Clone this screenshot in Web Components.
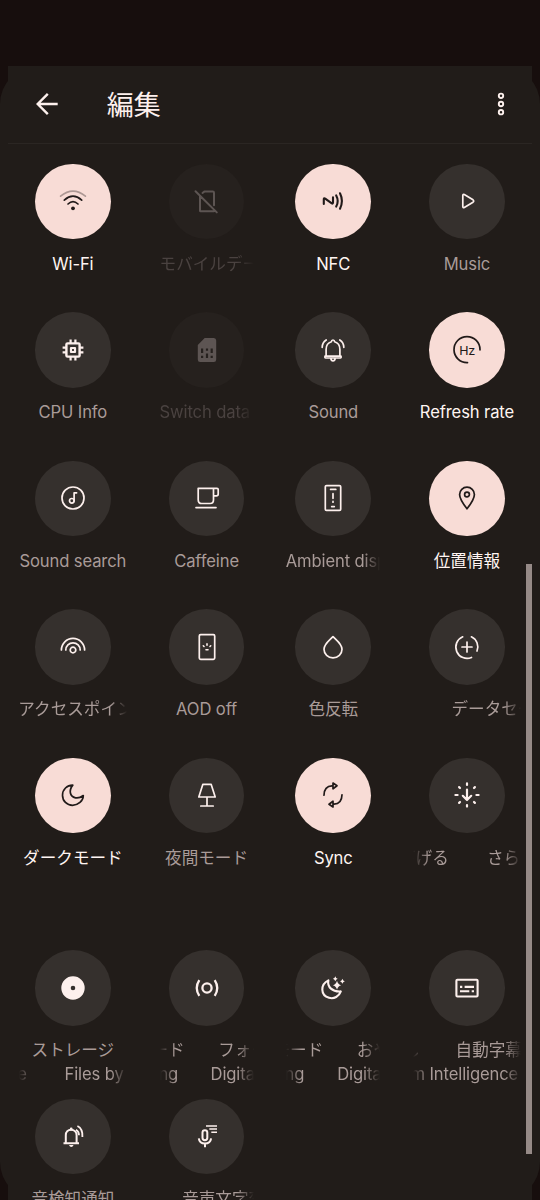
<!DOCTYPE html>
<html lang="ja">
<head>
<meta charset="utf-8">
<title>編集</title>
<style>
html,body{margin:0;padding:0;height:100%;overflow:hidden;background:#170e0d}
body{font-family:Inter,"Noto Sans CJK JP",sans-serif}
</style>
</head>
<body>
<edit-panel>
  <panel-header slot="header" heading="編集"></panel-header>
  <tile-grid>
    <qs-tile icon="wifi" state="on" label="Wi-Fi"></qs-tile>
    <qs-tile icon="nosim" state="off" label="モバイルデー" shift="0"></qs-tile>
    <qs-tile icon="nfc" state="on" label="NFC"></qs-tile>
    <qs-tile icon="play" label="Music"></qs-tile>
    <qs-tile icon="cpu" label="CPU Info"></qs-tile>
    <qs-tile icon="sim" state="off" label="Switch data" shift="0"></qs-tile>
    <qs-tile icon="bell" label="Sound"></qs-tile>
    <qs-tile icon="hz" state="on" label="Refresh rate"></qs-tile>
    <qs-tile icon="note" label="Sound search"></qs-tile>
    <qs-tile icon="cup" label="Caffeine"></qs-tile>
    <qs-tile icon="ambient" label="Ambient disp" shift="-.5"></qs-tile>
    <qs-tile icon="pin" state="on" label="位置情報"></qs-tile>
    <qs-tile icon="hotspot" label="アクセスポイン" shift="-.6"></qs-tile>
    <qs-tile icon="aod" label="AOD off"></qs-tile>
    <qs-tile icon="drop" label="色反転"></qs-tile>
    <qs-tile icon="saver" label="データセー" shift="38.5" fade="both"></qs-tile>
    <qs-tile icon="moon" state="on" label="ダークモード"></qs-tile>
    <qs-tile icon="lamp" label="夜間モード"></qs-tile>
    <qs-tile icon="sync" state="on" label="Sync"></qs-tile>
    <qs-tile icon="dim" label="下げる" next="さらに" shift="-14" at="74" fade="both"></qs-tile>
  </tile-grid>
  <tile-grid>
    <qs-tile icon="disc" label="ストレージ" sub="e" subnext="Files by" subend="8" subat="45.6" fade="both"></qs-tile>
    <qs-tile icon="focus" label="ード" next="フォー" end="25" at="58.6" sub="ng" subnext="Digital" subend="18.6" subat="51" fade="both"></qs-tile>
    <qs-tile icon="bedtime" label="モード" next="おや" end="37" at="70.6" sub="ng" subnext="Digital" subend="18" subat="51" fade="both"></qs-tile>
    <qs-tile icon="caption" label="し" next="自動字幕" end="7" at="42.6" sub="m Intelligence" subend="105.2" fade="both"></qs-tile>
    <qs-tile icon="alert" label="音検知通知"></qs-tile>
    <qs-tile icon="mic" label="音声文字変" shift="22.6" fade="both"></qs-tile>
  </tile-grid>
</edit-panel>

<script>
const ICONS = {
  wifi: '<path d="M-12.4-4.8Q0-15 12.4-4.8" opacity=".35"/><path d="M-8.7-.9Q0-8.7 8.7-.9M-5 3Q0-1.8 5 3"/><circle cy="7.3" r="1.9" class="f" stroke="none"/>',
  nosim: '<path d="M-11.5-9.8L9.8 11.4M-7-5V9.7Q-7 10.2-6.4 10.2H7M-4.5-8L-2.7-9.4H5.8Q7-9.4 7-8.2V4.2" stroke-width="2"/>',
  nfc: '<path d="M-9.2 3V-2Q-9-3.3-7.8-2.4L-1.2 2.4Q0 3 0 1.6V-3.7M3.2-5.6Q6.2 0 3.2 5.6M7-7.7Q10.8 0 7 7.7" stroke-width="2.1"/>',
  play: '<path d="M-4.2-5.6V5.6Q-4.2 7.2-2.7 6.5L6 1.2Q7.4 0 6-1.2L-2.7-6.5Q-4.2-7.2-4.2-5.6Z"/>',
  cpu: '<rect x="-6.6" y="-6.6" width="13.2" height="13.2" rx="1.2" stroke-width="2.4"/><rect x="-2" y="-2" width="4" height="4" stroke-width="2.2"/><path d="M-2.4-7V-10.4M2.4-7V-10.4M-2.4 7V10.4M2.4 7V10.4M-7-2.4H-10.4M-7 2.4H-10.4M7-2.4H10.4M7 2.4H10.4" stroke-width="2.2" stroke-linecap="butt"/>',
  sim: '<path class="f" fill-rule="evenodd" d="M-2.3-12H6.8Q9.2-12 9.2-9.5V9.5Q9.2 12 6.8 12H-6.8Q-9.2 12-9.2 9.5V-5ZM-6-1.5V3H-3.8V-1.5ZM-1.1-1.5V.8H1.1V-1.5ZM3.6-1.5V3H5.8V-1.5ZM-6 5.8V8H-3.8V5.8ZM-1.1 3.5V8H1.1V3.5ZM3.6 5.8V8H5.8V5.8Z" stroke="none"/>',
  bell: '<path d="M-6.9 6V-.5C-6.9-5-4.6-7.5-1.6-8.3Q-1.5-10 0-10Q1.5-10 1.6-8.3C4.6-7.5 6.9-5 6.9-.5V6M-8 6.1H8Q8.4 8 7.4 8H-7.4Q-8.4 8-8 6.1ZM-2.1 8.2Q-2.1 10.8 0 10.8Q2.1 10.8 2.1 8.2M-10.8-2.7Q-10.8-7.3-6.8-10M10.8-2.7Q10.8-7.3 6.8-10"/>',
  hz: '<path d="M13-.2A13 13 0 1 0 .5 12.6"/><text x="0" y="4.7" text-anchor="middle" font-size="13" font-weight="400" stroke="none" class="f" font-family="Roboto,sans-serif">Hz</text>',
  note: '<circle r="11"/><circle cx="-1.2" cy="2.8" r="2.3"/><path d="M1.1 2.8V-5.2H3.6"/>',
  cup: '<path d="M-8.8-9.7H10Q11.2-9.7 11.2-8.4V-4Q11.2-2.2 9.4-2.2H6.5M-8.8-9.7V1.8Q-8.8 5.5-5.3 5.5H3.2Q6.5 5.5 6.5 1.8V-9.7M-11 9.6H9"/>',
  ambient: '<rect x="-7.7" y="-12.4" width="15.4" height="24.8" rx="1.2"/><path d="M-2.4-8.6H2.8M0-4.3V.3M0 3.4V4.2M-1.3 8.6H1.3"/>',
  pin: '<path d="M0 10.8C-4.4 5.2-7.4 1.2-7.4-3.5A7.4 7.3 0 0 1 7.4-3.5C7.4 1.2 4.4 5.2 0 10.8Z"/><circle cy="-3.5" r="2.4"/>',
  hotspot: '<path d="M-11.6 3A11.6 11.6 0 0 1 11.6 3M-7.2 3A7.2 7.2 0 0 1 7.2 3"/><circle cy="3" r="2.8"/>',
  aod: '<rect x="-7.7" y="-12.3" width="15.4" height="24.6" rx="1.3"/><path d="M0-3.1V-1.8M-3.7-1.2L-3-.5M3.7-1.2L3-.5M-1 2.7H1" stroke-width="1.6"/>',
  drop: '<path d="M0-10.4C4-6.3 9-3 9 2.2A9 8.6 0 0 1-9 2.2C-9-3-4-6.3 0-10.4Z"/>',
  saver: '<path d="M-4.3-10.2A11.1 11.1 0 1 0 4.5 10.5M4.4-10.2A11.1 11.1 0 0 1 10 4M0-5V5M-5 0H5"/>',
  moon: '<path d="M-.2-9.9C-6-10-10.5-5.4-10.5 .2C-10.5 6-6 10.3-.5 10.3C5 10.3 10.3 6 10.3 .5C8 2.2 5.2 3.4 2.5 2.8C-3.2 1.5-4.5-4.5-.2-9.9Z"/>',
  lamp: '<path d="M-4.2-10.6H4.2L8.2 2H-8.2ZM0 2V11M-6.2 11H6.2"/>',
  sync: '<path d="M-9 .2Q-8.8-9-1-9.2M9-.2Q8.8 9 1 9.2M0-12L4-9.2L0-6.2ZM0 12L-4 9.2L0 6.2Z"/>',
  dim: '<path d="M0-5.5V4.5M-4.2 .8L0 5L4.2 .8M0-11.6V-10M0 10V11.6M-11.6 0H-9.4M9.4 0H11.6M-7.9-7.9L-7-7M7.9-7.9L7-7M-7.9 7.9L-7 7M7.9 7.9L7 7" stroke-width="2.2"/>',
  disc: '<circle r="7" stroke-width="9.4"/>',
  focus: '<circle r="4.6" stroke-width="2.3"/><path d="M-7.7-7.9Q-12.8 0-7.7 7.9M7.7-7.9Q12.8 0 7.7 7.9" stroke-width="2.3" stroke-linecap="butt"/>',
  bedtime: '<path d="M-4.6-7.6C-13 -3.5-12.6 7.5-4 9.8C1.2 11.2 6 8.5 7.8 3.4C-.6 4-6-1-4.6-7.6Z" stroke-width="2.1"/><path class="f" stroke="none" d="M4-7.2Q5-3.5 8.2-2.7Q5-1.9 4 1.8Q3-1.9-.2-2.7Q3-3.5 4-7.2ZM2.3-11.7Q2.8-9.7 4.7-9.2Q2.8-8.7 2.3-6.7Q1.8-8.7-.1-9.2Q1.8-9.7 2.3-11.7ZM9.4-9.2Q9.9-7.2 11.8-6.7Q9.9-6.2 9.4-4.2Q8.9-6.2 7-6.7Q8.9-7.2 9.4-9.2Z"/>',
  caption: '<rect x="-10.6" y="-8.3" width="21.2" height="16.8" rx="1" stroke-width="2.1"/><path d="M-7-1.1H-4.7M-2.4-1.1H7M-7 3.3H2.3M4.7 3.3H7" stroke-width="2.1" stroke-linecap="butt"/>',
  alert: '<path d="M-9.5 7.2H6M-7.2 7V-.7C-7.2-4-5-6.2-2-6.2S3.6-4 3.6-.7V7" stroke-width="2" stroke-linecap="butt"/><path class="f" stroke="none" d="M-3.2-5.5V-7A1.4 1.4 0 0 1-.4-7V-5.5ZM-4 9H.6Q-.2 11-1.7 11T-4 9Z"/><path d="M3-6.2Q6-4.5 6-.7M4.4-10Q10-7.3 9.4 1" stroke-width="1.8" stroke-linecap="butt"/>',
  mic: '<rect x="-4.5" y="-5.8" width="4.8" height="10" rx="2.4" stroke-width="2"/><path d="M-8.2 2.4C-7.3 9.3 3.2 9.3 4.1 2.4M-2 7.8V11.2" stroke-width="2" stroke-linecap="butt"/><path d="M-1-10.1H10M2.3-6.9H10M4.3-3.7H10" stroke-width="1.5" stroke-linecap="butt"/>'
};

customElements.define('qs-icon', class extends HTMLElement {
  connectedCallback() {
    this.attachShadow({mode: 'open'}).innerHTML = `
      <style>
        :host{display:block;width:36px;height:36px}
        svg{display:block;width:36px;height:36px;fill:none;stroke:currentColor;stroke-width:1.7;stroke-linecap:round;stroke-linejoin:round}
        .f{fill:currentColor}
      </style>
      <svg viewBox="-18 -18 36 36">${ICONS[this.getAttribute('name')]}</svg>`;
  }
});

/* One line of a tile label: centred, or frozen part-way through its marquee.
   shift = start of the text, end = right edge of the outgoing copy,
   at = start of the incoming copy, all from the left edge of the line. */
customElements.define('marquee-line', class extends HTMLElement {
  connectedCallback() {
    const a = n => this.getAttribute(n);
    const first = a('text'), next = a('next');
    const moving = a('shift') !== null || a('end') !== null;
    const tight = t => /^[\x20-\x7e]+$/.test(t) ? 'letter-spacing:-.12px;' : '';
    let body = `<span style="${tight(first)}">${first}</span>`;
    if (a('end') !== null) body = `<span class="out" style="${tight(first)}width:${a('end')}px">${first}</span>`;
    else if (a('shift') !== null) body = `<span style="${tight(first)}margin-left:${a('shift')}px;${next ? `width:${a('at') - a('shift')}px` : ''}">${first}</span>`;
    if (next) body += `<span style="${tight(next)}margin-left:${a('end') !== null ? a('at') - a('end') : 0}px">${next}</span>`;
    const left = a('fade') === 'both' ? 'transparent,#000 16px' : '#000,#000 16px';
    const mask = moving ? `linear-gradient(90deg,${left},#000 calc(100% - 17px),transparent)` : 'none';
    this.attachShadow({mode: 'open'}).innerHTML = `
      <style>
        :host{display:flex;width:100%;height:24px;line-height:24px;overflow:hidden;white-space:nowrap;
          justify-content:${moving ? 'flex-start' : 'center'};-webkit-mask-image:${mask};mask-image:${mask}}
        span{flex:none}
        .out{display:flex;justify-content:flex-end}
      </style>${body}`;
  }
});

customElements.define('qs-tile', class extends HTMLElement {
  connectedCallback() {
    const g = n => this.getAttribute(n);
    const pass = (from, to) => g(from) !== null ? ` ${to}="${g(from)}"` : '';
    this.attachShadow({mode: 'open'}).innerHTML = `
      <style>
        :host{display:flex;flex-direction:column;align-items:center;min-width:0;color:#a99b98;font-size:16.6px}
        :host([state=on]){color:#fff5f2}
        :host([state=off]){color:#4a4240}
        .disc{display:grid;place-items:center;flex:none;width:75.6px;height:75.6px;border-radius:50%;background:#35302d;color:#fdf0ed;margin-bottom:12.7px}
        :host([state=on]) .disc{background:#f8dcd6;color:#211a19}
        :host([state=off]) .disc{background:#26211e;color:#5d5553}
      </style>
      <div class="disc"><qs-icon name="${g('icon')}"></qs-icon></div>
      <marquee-line text="${g('label')}"${pass('next','next')}${pass('shift','shift')}${pass('end','end')}${pass('at','at')}${pass('fade','fade')}></marquee-line>
      ${g('sub') ? `<marquee-line text="${g('sub')}"${pass('subnext','next')}${pass('subend','end')}${pass('subat','at')} fade="both"></marquee-line>` : ''}`;
  }
});

customElements.define('tile-grid', class extends HTMLElement {
  connectedCallback() {
    this.attachShadow({mode: 'open'}).innerHTML = `
      <style>
        :host{display:grid;grid-template-columns:108px 94px 94px 108px;column-gap:32.7px;grid-auto-rows:148.5px;margin-left:10.6px}
      </style><slot></slot>`;
  }
});

customElements.define('panel-header', class extends HTMLElement {
  connectedCallback() {
    this.attachShadow({mode: 'open'}).innerHTML = `
      <style>
        :host{display:flex;align-items:center;box-sizing:border-box;height:78px;padding:0 18.5px 1px 26.5px;border-bottom:1.5px solid #2b2623;color:#fdf0ed}
        svg{display:block;flex:none;fill:none;stroke:currentColor}
        h1{flex:1;margin:4px 0 0 48px;font-size:27px;line-height:40px;font-weight:400}
      </style>
      <svg width="24" height="24" viewBox="-12 -12 24 24" stroke-width="2.4"><path d="M10.7 0H-8.8M.8-10.2L-9.3 0L.8 10.2"/></svg>
      <h1>${this.getAttribute('heading')}</h1>
      <svg width="24" height="30" viewBox="-12 -15 24 30" stroke-width="1.9"><circle cy="-8.2" r="2.2"/><circle r="2.2"/><circle cy="8.2" r="2.2"/></svg>`;
  }
});

customElements.define('edit-panel', class extends HTMLElement {
  connectedCallback() {
    this.attachShadow({mode: 'open'}).innerHTML = `
      <style>
        :host{display:block;box-sizing:border-box;height:1200px;padding-top:66px;overflow:hidden}
        .back{height:1134px;border-radius:38px;background:#211c19;display:flex;justify-content:center}
        .sheet{position:relative;width:523.4px;height:1134px;background:#211c19;overflow:hidden}
        .tiles{display:flex;flex-direction:column;gap:44px;padding-top:19.5px}
        .thumb{position:absolute;right:0;top:498px;width:5.6px;height:590px;background:#968a87}
      </style>
      <div class="back"><div class="sheet">
        <slot name="header"></slot>
        <div class="tiles"><slot></slot></div>
        <div class="thumb"></div>
      </div></div>`;
  }
});
</script>
</body>
</html>
